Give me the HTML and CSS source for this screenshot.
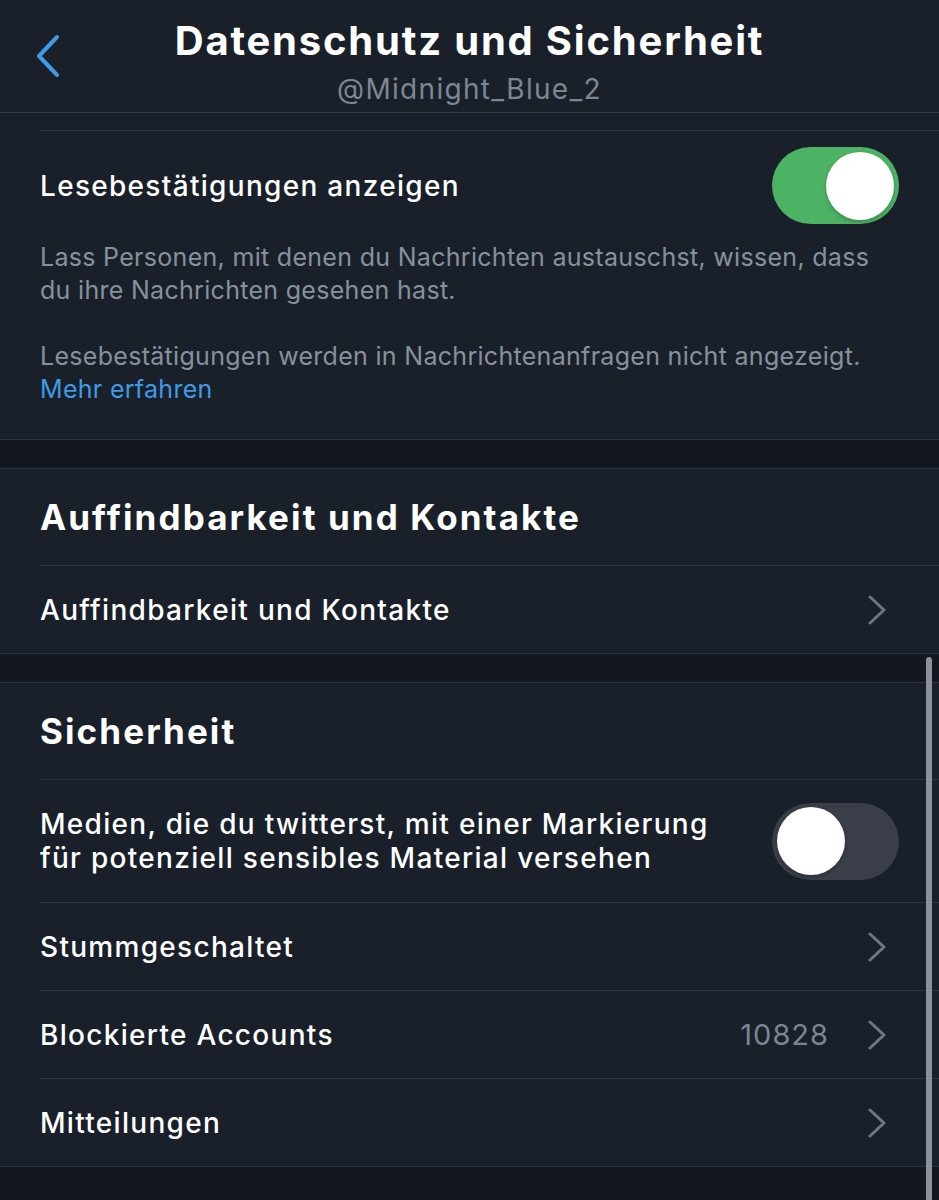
FILE: index.html
```html
<!DOCTYPE html>
<html lang="de">
  <head>
    <meta charset="UTF-8" />
    <meta name="viewport" content="width=device-width, initial-scale=1.0" />
    <title>Datenschutz und Sicherheit</title>
    <link rel="stylesheet" href="styles.css">
  </head>
  <body>
    <div id="settingsScreen">
      <!-- Navigation Bar -->
      <header class="nav-bar">
        <button class="back-button">
          <svg width="26" height="44" viewBox="0 0 26 44">
            <path d="M22 3 L4 22 L22 41" fill="none" stroke="#3f9be6" stroke-width="4" stroke-linecap="round" stroke-linejoin="round" />
          </svg>
        </button>
        <div class="nav-title">
          <h1>Datenschutz und Sicherheit</h1>
          <div class="nav-subtitle">@Midnight_Blue_2</div>
        </div>
        <div></div>
      </header>

      <!-- Direktnachrichten (scrolled) -->
      <section class="group group-first">
        <div class="row toggle-row">
          <span class="row-label">Lesebestätigungen anzeigen</span>
          <span class="switch on"><span class="knob"></span></span>
        </div>
        <div class="row-desc">
          <p>Lass Personen, mit denen du Nachrichten austauschst, wissen, dass du ihre Nachrichten gesehen hast.</p>
          <p>Lesebestätigungen werden in Nachrichtenanfragen nicht angezeigt. <a href="#" class="link">Mehr erfahren</a></p>
        </div>
      </section>

      <div class="group-gap"></div>

      <section class="group">
        <h2 class="group-title">Auffindbarkeit und Kontakte</h2>
        <a href="#" class="row nav-row">
          <span class="row-label">Auffindbarkeit und Kontakte</span>
          <span class="row-right">
            <svg class="chevron" width="20" height="30" viewBox="0 0 20 30">
              <path d="M3 2 L17 15 L3 28" fill="none" stroke="#6d7681" stroke-width="3" stroke-linecap="round" stroke-linejoin="round" />
            </svg>
          </span>
        </a>
      </section>

      <div class="group-gap"></div>

      <section class="group">
        <h2 class="group-title">Sicherheit</h2>
        <div class="row toggle-row tall">
          <span class="row-label">Medien, die du twitterst, mit einer Markierung für potenziell sensibles Material versehen</span>
          <span class="switch"><span class="knob"></span></span>
        </div>
        <a href="#" class="row nav-row">
          <span class="row-label">Stummgeschaltet</span>
          <span class="row-right">
            <svg class="chevron" width="20" height="30" viewBox="0 0 20 30">
              <path d="M3 2 L17 15 L3 28" fill="none" stroke="#6d7681" stroke-width="3" stroke-linecap="round" stroke-linejoin="round" />
            </svg>
          </span>
        </a>
        <a href="#" class="row nav-row">
          <span class="row-label">Blockierte Accounts</span>
          <span class="row-right">
            <span class="row-value">10828</span>
            <svg class="chevron" width="20" height="30" viewBox="0 0 20 30">
              <path d="M3 2 L17 15 L3 28" fill="none" stroke="#6d7681" stroke-width="3" stroke-linecap="round" stroke-linejoin="round" />
            </svg>
          </span>
        </a>
        <a href="#" class="row nav-row">
          <span class="row-label">Mitteilungen</span>
          <span class="row-right">
            <svg class="chevron" width="20" height="30" viewBox="0 0 20 30">
              <path d="M3 2 L17 15 L3 28" fill="none" stroke="#6d7681" stroke-width="3" stroke-linecap="round" stroke-linejoin="round" />
            </svg>
          </span>
        </a>
      </section>

      <div class="group-gap"></div>

      <!-- Scroll indicator -->
      <div class="scroll-indicator"></div>
    </div>
  </body>
</html>
```

FILE: styles.css
```css
html,
body {
  margin: 0;
  padding: 0;
  width: 100%;
  height: 100%;
  background: #131820;
}

#settingsScreen {
  position: relative;
  width: 939px;
  height: 1200px;
  overflow: hidden;
  font-family: Inter, "Noto Sans", sans-serif;
  color: #fff;
  background: #131820;
}

/* Navigation Bar */
.nav-bar {
  display: grid;
  grid-template-columns: 100px 1fr 100px;
  align-items: center;
  height: 112px;
  background: #19202a;
  border-bottom: 1px solid #353d48;
}

.nav-bar .back-button {
  display: flex;
  align-items: center;
  justify-content: center;
  width: 26px;
  height: 44px;
  margin-left: 35px;
  padding: 0;
  border: none;
  background: none;
}

.nav-bar .nav-title {
  display: flex;
  flex-direction: column;
  align-items: center;
  align-self: start;
  padding-top: 17px;
}

.nav-bar h1 {
  margin: 0;
  font-size: 40px;
  font-weight: 700;
  line-height: 48px;
  letter-spacing: 1.8px;
  white-space: nowrap;
}

.nav-bar .nav-subtitle {
  margin-top: 8px;
  font-size: 28px;
  line-height: 32px;
  letter-spacing: 1.3px;
  color: #7d8794;
}

/* Groups */
.group {
  background: #19202a;
  border-top: 1px solid #2c333e;
  border-bottom: 1px solid #2c333e;
}

.group-first {
  border-top: none;
  padding-top: 17px;
}

.group-gap {
  height: 28px;
  background: #131820;
}

.group-title {
  display: flex;
  align-items: center;
  height: 96px;
  margin: 0;
  padding: 0 40px;
  font-size: 35px;
  font-weight: 700;
  letter-spacing: 2.1px;
}

.row {
  display: flex;
  align-items: center;
  justify-content: space-between;
  margin-left: 40px;
  padding-right: 52px;
  border-top: 1px solid #2c333e;
  color: #fff;
  text-decoration: none;
}

.row .row-label {
  font-size: 28px;
  line-height: 34px;
  font-weight: 500;
  letter-spacing: 1.3px;
}

.nav-row {
  height: 87px;
}

.toggle-row {
  height: 109px;
  padding-right: 40px;
}

.toggle-row.tall {
  height: 122px;
}

.toggle-row.tall .row-label {
  max-width: 700px;
}

.row .row-right {
  display: flex;
  align-items: center;
  gap: 38px;
}

.row .row-value {
  font-size: 29px;
  letter-spacing: 1px;
  color: #7b8591;
}

.row .chevron {
  display: block;
}

/* Switch */
.switch {
  display: flex;
  align-items: center;
  flex-shrink: 0;
  width: 127px;
  height: 77px;
  padding: 0 5px;
  box-sizing: border-box;
  border-radius: 39px;
  background: #393e48;
}

.switch .knob {
  width: 68px;
  height: 68px;
  border-radius: 50%;
  background: #fff;
  box-shadow: 0 2px 4px rgba(0, 0, 0, 0.25);
}

.switch.on {
  justify-content: flex-end;
  background: #4db364;
}

/* Description */
.row-desc {
  padding: 1px 60px 33px 40px;
  font-size: 25px;
  line-height: 33px;
  letter-spacing: 0.3px;
  color: #87919d;
}

.row-desc p {
  margin: 0 0 33px;
}

.row-desc p:last-child {
  margin-bottom: 0;
}

.row-desc .link {
  color: #3f9be6;
  text-decoration: none;
}

/* Scroll indicator (overlay) */
.scroll-indicator {
  position: absolute;
  top: 657px;
  right: 7px;
  width: 6px;
  height: 560px;
  border-radius: 3px;
  background: #8c9098;
}
```
